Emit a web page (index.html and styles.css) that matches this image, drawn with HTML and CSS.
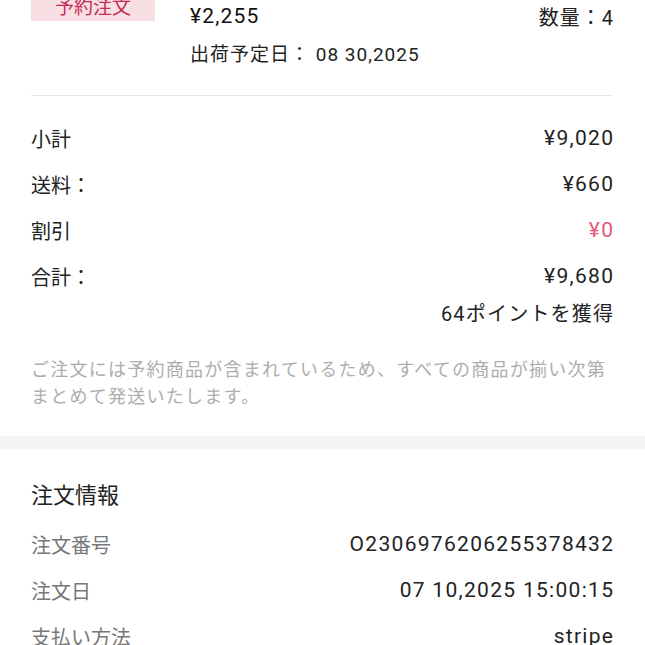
FILE: index.html
```html
<!DOCTYPE html>
<html lang="ja">
<head>
    <meta charset="UTF-8">
    <meta name="viewport" content="width=device-width, initial-scale=1.0">
    <title>注文詳細</title>
    <link rel="stylesheet" href="styles.css">
</head>
<body>
    <div class="pedido">
        <div class="produto">
            <div class="foto">
                <span class="selo">予約注文</span>
            </div>
            <div class="dados">
                <div class="linha-preco">
                    <span class="preco">¥2,255</span>
                    <span class="qtd">数量：4</span>
                </div>
                <p class="envio">出荷予定日： 08 30,2025</p>
            </div>
        </div>

        <div class="resumo">
            <div class="linha"><span>小計</span><span class="valor">¥9,020</span></div>
            <div class="linha"><span>送料：</span><span class="valor">¥660</span></div>
            <div class="linha"><span>割引</span><span class="valor vermelho">¥0</span></div>
            <div class="linha"><span>合計：</span><span class="valor">¥9,680</span></div>
            <div class="pontos">64ポイントを獲得</div>
            <p class="aviso">ご注文には予約商品が含まれているため、すべての商品が揃い次第<br>まとめて発送いたします。</p>
        </div>
    </div>

    <div class="faixa"></div>

    <div class="info">
        <h2>注文情報</h2>
        <div class="linha cinza"><span>注文番号</span><span class="valor">O2306976206255378432</span></div>
        <div class="linha cinza"><span>注文日</span><span class="valor">07 10,2025 15:00:15</span></div>
        <div class="linha cinza"><span>支払い方法</span><span class="valor">stripe</span></div>
    </div>
</body>
</html>
```

FILE: styles.css
```css
* {
    margin: 0;
    padding: 0;
    box-sizing: border-box;
}
body {
    background-color: white;
    color: #222;
    font-family: Roboto, "Noto Sans CJK JP", sans-serif;
    font-size: 20px;
    overflow: hidden;
}
.pedido {
    padding: 0 32px 0 31px;
    margin-top: -5px;
}
.produto {
    display: flex;
    gap: 35px;
    padding-bottom: 27px;
    border-bottom: 1px solid #e6e6e6;
}
.foto {
    width: 124px;
    display: flex;
    align-items: flex-start;
}
.selo {
    display: block;
    width: 100%;
    height: 26px;
    line-height: 26px;
    text-align: center;
    background-color: #f8dfe4;
    color: #c52a55;
    font-size: 19px;
}
.dados {
    flex: 1;
    padding-top: 5px;
}
.linha-preco {
    display: flex;
    justify-content: space-between;
    align-items: center;
    height: 32px;
}
.preco {
    font-size: 21px;
    color: #111;
    letter-spacing: 1.2px;
}
.qtd {
    font-size: 20px;
    letter-spacing: 1px;
    margin-right: -1px;
}
.envio {
    margin-top: 10px;
    line-height: 26px;
    font-size: 19px;
    letter-spacing: 1px;
}
.resumo {
    padding-top: 19px;
    padding-bottom: 26px;
}
.linha {
    display: flex;
    justify-content: space-between;
    align-items: center;
    height: 46px;
    font-size: 20px;
}
.valor {
    font-size: 21px;
    letter-spacing: 1.3px;
    margin-right: -1.3px;
}
.vermelho {
    color: #e4587a;
}
.pontos {
    text-align: right;
    line-height: 30px;
    height: 30px;
    font-size: 20px;
    letter-spacing: 1.2px;
    margin-right: -1.2px;
}
.aviso {
    margin-top: 27px;
    font-size: 18px;
    letter-spacing: 1.25px;
    line-height: 27px;
    color: #adadad;
    white-space: nowrap;
}
.faixa {
    height: 13px;
    background-color: #f5f5f5;
}
.info {
    padding: 32px 32px 0 31px;
}
.info h2 {
    font-size: 22px;
    font-weight: normal;
    line-height: 30px;
    margin-bottom: 10px;
}
.cinza span:first-child {
    color: #777;
}
```
